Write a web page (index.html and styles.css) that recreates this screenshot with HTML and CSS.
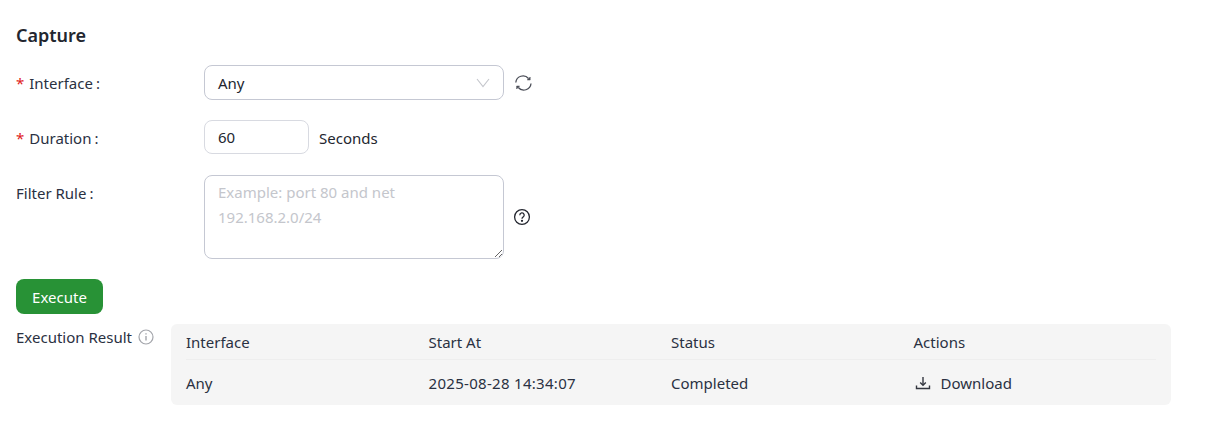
FILE: index.html
```html
<!DOCTYPE html>
<html lang="en">
<head>
    <meta charset="UTF-8">
    <meta name="viewport" content="width=device-width, initial-scale=1.0">
    <title>Capture</title>
    <link rel="stylesheet" href="styles.css">
</head>
<body>
    <div class="page">
        <h1 class="title">Capture</h1>
        <form class="form">
            <div class="form-row">
                <label class="form-label"><span class="req">*</span>Interface<span class="colon">:</span></label>
                <div class="select">
                    <span>Any</span>
                    <svg class="select-arrow" width="14" height="14" viewBox="0 0 14 14" fill="none" stroke="#c4c6cc" stroke-width="1.1"><path d="M1 3 7 10.500 13 3"/></svg>
                </div>
                <svg class="icon" width="18" height="18" viewBox="0 0 18 18" fill="none" stroke="#4a4d57" stroke-width="1.3"><path d="M1.800 8.500A7.200 7.200 0 0 1 14.500 4.500"/><path d="M17 9.500A7.200 7.200 0 0 1 4.300 13.500"/><path d="M16.200 3V6H13.200Z" fill="#4a4d57" stroke-width=".5"/><path d="M2.600 15V12H5.600Z" fill="#4a4d57" stroke-width=".5"/></svg>
            </div>
            <div class="form-row">
                <label class="form-label"><span class="req">*</span>Duration<span class="colon">:</span></label>
                <div class="input">60</div>
                <span class="unit">Seconds</span>
            </div>
            <div class="form-row">
                <label class="form-label form-label-top">Filter Rule<span class="colon">:</span></label>
                <textarea class="textarea" placeholder="Example: port 80 and net 192.168.2.0/24"></textarea>
                <svg class="icon icon-help" width="18" height="18" viewBox="0 0 18 18" fill="none" stroke="#23262f" stroke-width="1.300"><circle cx="9" cy="9" r="7.400"/><path d="M6.800 7.200A2.200 2.200 0 1 1 10 9.100C9.300 9.500 9 9.900 9 10.700"/><circle cx="9" cy="12.800" r=".5" fill="#23262f"/></svg>
            </div>
            <button type="button" class="btn">Execute</button>
        </form>
        <div class="result">
            <div class="result-label">
                <span>Execution Result</span>
                <svg width="16" height="16" viewBox="0 0 16 16" fill="none" stroke="#a3a5ab" stroke-width="1.200"><circle cx="8" cy="8" r="7"/><path d="M8 7v4.500" stroke-width="1.400"/><path d="M8 4.200v1.300" stroke-width="1.400"/></svg>
            </div>
            <div class="result-panel">
                <div class="result-row result-head">
                    <div>Interface</div>
                    <div>Start At</div>
                    <div>Status</div>
                    <div>Actions</div>
                </div>
                <div class="result-row">
                    <div>Any</div>
                    <div class="date">2025-08-28 14:34:07</div>
                    <div>Completed</div>
                    <div class="download">
                        <svg width="16" height="14" viewBox="0 0 16 14" fill="none" stroke="#33363f" stroke-width="1.400"><path d="M8 1v8"/><path d="M5.200 6.500 8 9.300l2.800-2.800"/><path d="M1.500 9.500v3h13v-3"/></svg>
                        <span>Download</span>
                    </div>
                </div>
            </div>
        </div>
    </div>
</body>
</html>
```

FILE: styles.css
```css
* {
    box-sizing: border-box;
}
body {
    margin: 0;
    background: #fff;
    color: #2a3142;
    font-family: "Noto Sans", sans-serif;
    font-size: 15px;
}
.page {
    padding: 23px 34px 0 16px;
}
.title {
    margin: 0 0 18px;
    font-size: 18px;
    line-height: 24px;
    font-weight: 600;
    color: #23262f;
}
.form-row {
    display: flex;
    align-items: center;
    gap: 10px;
    min-height: 35px;
    margin-bottom: 20px;
}
.form-label {
    width: 178px;
    flex-shrink: 0;
    line-height: 20px;
}
.form-label-top {
    align-self: flex-start;
    padding-top: 8px;
}
.req {
    color: #e02020;
    margin-right: 5px;
}
.colon {
    margin-left: 3px;
}
.select {
    width: 300px;
    height: 35px;
    display: flex;
    align-items: center;
    justify-content: space-between;
    padding: 0 13px;
    border: 1px solid #c5c8d3;
    border-radius: 8px;
    color: #23262f;
}
.input {
    width: 105px;
    height: 34px;
    align-self: flex-start;
    display: flex;
    align-items: center;
    padding: 0 13px;
    border: 1px solid #d8dae1;
    border-radius: 8px;
    color: #23262f;
}
.unit {
    color: #23262f;
}
.textarea {
    display: block;
    width: 300px;
    height: 84px;
    padding: 4px 13px;
    border: 1px solid #c5c8d3;
    border-radius: 8px;
    font: inherit;
    line-height: 24.500px;
    color: #23262f;
    outline: none;
}
.textarea::placeholder {
    color: #c4c6cc;
}
.icon-help {
    margin-left: -1px;
}
.btn {
    display: block;
    width: 87px;
    height: 35px;
    border: none;
    border-radius: 8px;
    background: #289236;
    color: #fff;
    font: inherit;
}
.result {
    display: flex;
    margin-top: 10px;
}
.result-label {
    width: 155px;
    flex-shrink: 0;
    display: flex;
    align-items: center;
    align-self: flex-start;
    gap: 6px;
    height: 20px;
    margin-top: 3px;
}
.result-panel {
    width: 1000px;
    height: 81px;
    padding: 0 15px;
    background: #f5f5f5;
    border-radius: 6px;
}
.result-row {
    display: grid;
    grid-template-columns: repeat(4, 242.500px);
    align-items: center;
    height: 45px;
}
.result-head {
    height: 36px;
    border-bottom: 1px solid #eeeeee;
}
.date {
    letter-spacing: 0.3px;
}
.download {
    display: flex;
    align-items: center;
    gap: 10px;
    padding-left: 1px;
}
```
